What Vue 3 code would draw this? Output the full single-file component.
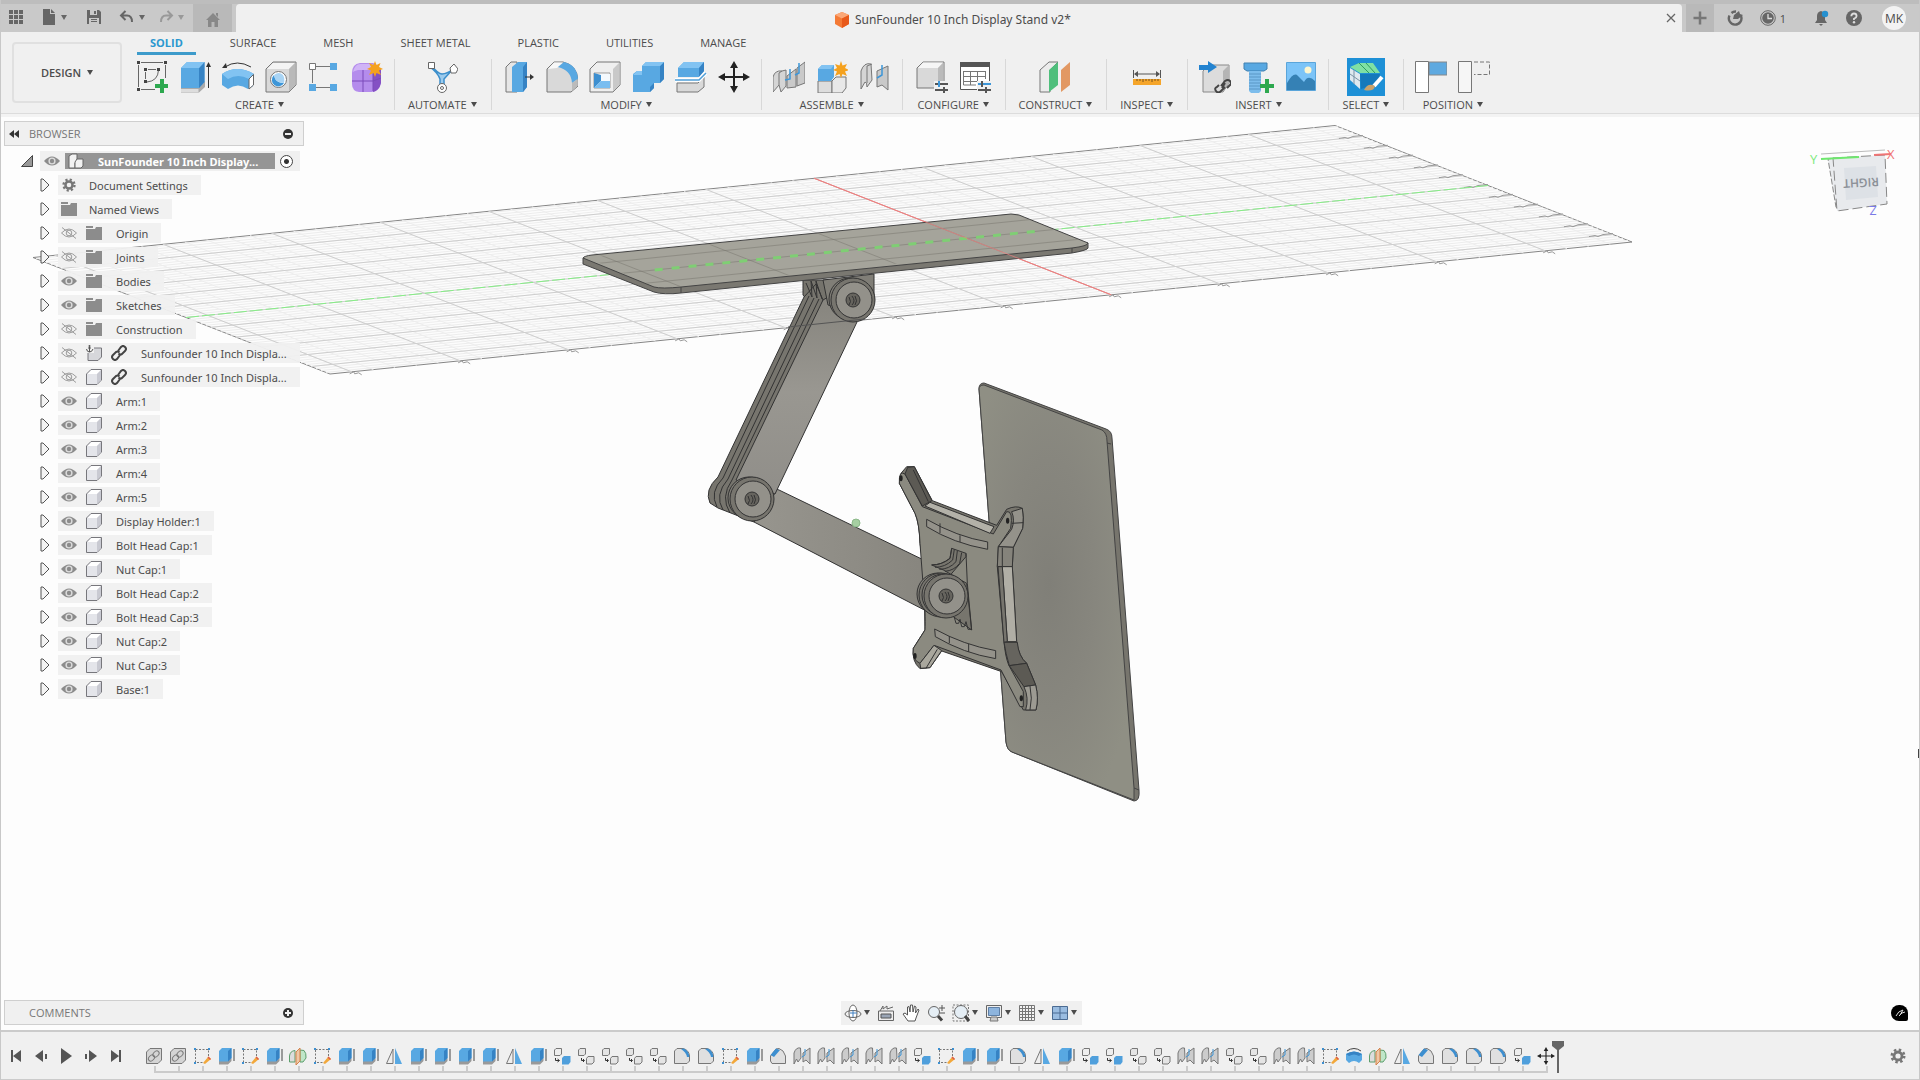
<template>
  <div class="app">
    <!-- Shared icon shapes -->
    <svg class="sprite" aria-hidden="true">
      <symbol id="i-apps" viewBox="0 0 16 16"><path d="M1 1h4v4H1zM6 1h4v4H6zM11 1h4v4h-4zM1 6h4v4H1zM6 6h4v4H6zM11 6h4v4h-4zM1 11h4v4H1zM6 11h4v4H6zM11 11h4v4h-4z" fill="#666" /></symbol>
      <symbol id="i-file" viewBox="0 0 16 16"><path d="M2 0h7v5h5v11H2zM10 0l4 4h-4z" fill="#666" /></symbol>
      <symbol id="i-save" viewBox="0 0 16 16"><path d="M1 1h12l2 2v12H1z" fill="#666" /><path d="M4 1h7v5H4zM3 9h10v6H3z" fill="#c9c9c9" /><path d="M8 2h2v3H8zM5 10h6v1H5zM5 12h6v1H5z" fill="#666" /></symbol>
      <symbol id="i-undo" viewBox="0 0 16 16"><path d="M6.500 2L2 6.500L6.500 11M2 6.500H8Q13 6.500 13 13" fill="none" stroke="#666" stroke-width="2" /></symbol>
      <symbol id="i-redo" viewBox="0 0 16 16"><path d="M9.500 2L14 6.500L9.500 11M14 6.500H8Q3 6.500 3 13" fill="none" stroke="#999" stroke-width="2" /></symbol>
      <symbol id="i-home" viewBox="0 0 16 16"><path d="M8 1L15 8H13V15H9.500V10H6.500V15H3V8H1zM11 1h2v4l-2-2z" fill="#888" /></symbol>
      <symbol id="i-plus" viewBox="0 0 16 16"><path d="M8 1.500V14.500M1.500 8H14.500" stroke="#777" stroke-width="2.500" /></symbol>
      <symbol id="i-close" viewBox="0 0 16 16"><path d="M4 4L12 12M12 4L4 12" stroke="#666" stroke-width="1.300" /></symbol>
      <symbol id="i-refresh" viewBox="0 0 16 16"><path d="M2.500 5.500A6.300 6.300 0 1 0 14 6M4.500 3A6.300 6.300 0 0 1 9 1.500" fill="none" stroke="#666" stroke-width="2.400" /><path d="M7 5L12 1L13 4L16 5L11 9L6 9z" fill="#666" /></symbol>
      <symbol id="i-clock" viewBox="0 0 16 16"><circle cx="8" cy="8" r="7.300" fill="none" stroke="#666" /><circle cx="8" cy="8" r="5.800" fill="#666" /><path d="M8 4V8.500H12" fill="none" stroke="#ddd" stroke-width="1.300" /></symbol>
      <symbol id="i-bell" viewBox="0 0 16 16"><path d="M8 1Q12 2 12 6V10L14 13H2L4 10V6Q4 2 8 1zM6 14h4l-2 2z" fill="#666" /><circle cx="12" cy="4" r="3.200" fill="#2590cf" /></symbol>
      <symbol id="i-help" viewBox="0 0 16 16"><circle cx="8" cy="8" r="8" fill="#666" /><path d="M5.300 6.200Q5.500 3.500 8 3.500T10.600 6Q10.600 7.500 8 8.700V10" fill="none" stroke="#ddd" stroke-width="1.800" /><circle cx="8" cy="12.300" r="1.200" fill="#ddd" /></symbol>
      <symbol id="i-cube" viewBox="0 0 16 16"><path d="M8 0L15 3V12L8 16L1 12V3z" fill="#f47a35" /><path d="M8 0L15 3L8 6.500L1 3z" fill="#fba878" /><path d="M15 3V12L8 16V6.500z" fill="#e8591a" /></symbol>

      <!-- Ribbon, 32px -->
      <symbol id="i-sketch" viewBox="0 0 32 32">
        <path d="M5 1.500H27M2.500 4V26M29.500 4V17M5 28.500H19M12 8.500H20M9.500 11V18M22.500 9Q22 20 11 21" fill="none" stroke="#666" />
        <path d="M1 0h3v3H1zM28 0h3v3h-3zM1 27h3v3H1zM8 7h3v3H8zM21 7h3v3h-3zM8 19h3v3H8z" fill="#444" />
        <path d="M24 18h4v5h5v4h-5v5h-4v-5h-5v-4h5z" fill="#2da84f" />
      </symbol>
      <symbol id="i-extrude" viewBox="0 0 32 32">
        <path d="M2 26H20L26 20V26L20 31.500H2z" fill="#aaa" /><path d="M2 28H19.500V31H2z" fill="#ddd" />
        <path d="M2 7L8 1H25.500V21L20 27H2z" fill="#58a8e2" /><path d="M20 7L25.500 1V21L20 27z" fill="#3683c4" /><path d="M2 7L8 1H25.500L20 7z" fill="#82c3f2" />
        <path d="M29.500 27V3" stroke="#333" /><path d="M27 6L29.500 1L32 6z" fill="#333" />
      </symbol>
      <symbol id="i-revolve" viewBox="0 0 32 32">
        <path d="M0 13Q15 3 32 13L31 25L26 28Q16 21 6 28L0 24z" fill="#58a8e2" /><path d="M0 13Q15 3 32 13L27 18Q16 12 6 18z" fill="#82c3f2" />
        <path d="M27 18L31.500 13.500V24L27 28z" fill="#fff" stroke="#666" />
        <path d="M3 6Q15 -2 29 6" fill="none" stroke="#333" /><path d="M0 7L4 2L5 7z" fill="#333" />
      </symbol>
      <symbol id="i-hole" viewBox="0 0 32 32">
        <path d="M1 8L8 1H31V24L24 31H1z" fill="#d9d9d9" stroke="#777" /><path d="M2 8L8 2H30L24 8z" fill="#f4f4f4" /><path d="M24 8L30.500 1.500V24L24 30.500z" fill="#b9b9b9" />
        <circle cx="13.500" cy="18.500" r="8" fill="#fff" stroke="#777" /><path d="M9 14Q10 22 19 22A6.500 6.500 0 1 1 9 14z" fill="#3d96d8" /><path d="M9 14Q14 10 18 14Q20 17 19 22Q10 22 9 14z" fill="#a9d4f4" />
      </symbol>
      <symbol id="i-pattern" viewBox="0 0 32 32">
        <path d="M8 5.500H22M8 26.500H22M4.500 9V22" stroke="#777" /><path d="M1.500 2.500h6v6h-6z" fill="#fff" stroke="#777" /><path d="M22 2h7v7h-7zM1 23h7v7H1zM22 23h7v7h-7z" fill="#58a8e2" />
      </symbol>
      <symbol id="i-form" viewBox="0 0 32 32">
        <path d="M1 12Q1 3 9 2H22Q30 5 30 12V22Q28 31 20 31H8Q1 30 1 23z" fill="#b48cec" /><path d="M2 11Q4 3 9 3H22L18 9H7Q3 10 2 11z" fill="#d0b4f6" /><path d="M22 12L30 8V22Q28 30 22 31z" fill="#8450c4" />
        <path d="M12 9V31M1 20H22L30 17M22 10V30" fill="none" stroke="#7a4aba" />
        <path d="M24 0L25.500 4L29.500 2L28 6L32 8L28 9.500L30 14L25.500 12L24 16L22.500 12L18 14L20 9.500L16 8L20 6L18 2L22.500 4z" fill="#f5a11d" />
      </symbol>
      <symbol id="i-automate" viewBox="0 0 32 32">
        <path d="M6 5Q12 13 16 13Q21 13 27 8L18 18V27H14V18Q12 12 4 6z" fill="#9ccbed" stroke="#3d8fcb" stroke-width="1.500" />
        <path d="M2.500 1.500h6v6h-6z" fill="#fff" stroke="#666" /><path d="M28 3L32 8L30 12H25L24 7z" fill="#fff" stroke="#666" /><circle cx="16" cy="27" r="4.500" fill="#fff" stroke="#666" /><circle cx="16" cy="27" r="1.500" fill="none" stroke="#666" />
      </symbol>
      <symbol id="i-presspull" viewBox="0 0 32 32">
        <path d="M3 6L8 1H14V31H3z" fill="#e6e6e6" stroke="#777" /><path d="M9 6L15 1H24V26L20 31H9z" fill="#58a8e2" /><path d="M20 6L24 1V26L20 31z" fill="#3683c4" /><path d="M22 16H28" stroke="#333" /><path d="M27 13L31 16L27 19z" fill="#333" />
      </symbol>
      <symbol id="i-fillet" viewBox="0 0 32 32">
        <path d="M1 8L8 1H17Q31 4 32 19V25L25 31H1z" fill="#d9d9d9" stroke="#777" /><path d="M2 8L8 1.500H17L11 7z" fill="#f8f8f8" /><path d="M12 6L18 1Q31 4 32 18L26 22Q25 9 12 6z" fill="#58a8e2" /><path d="M26 22L31.500 18V25L26 30z" fill="#bbb" />
      </symbol>
      <symbol id="i-shell" viewBox="0 0 32 32">
        <path d="M1 8L8 1H31V24L24 31H1z" fill="#efefef" stroke="#777" /><path d="M24 8L30.500 1.500V24L24 30.500z" fill="#c9c9c9" /><path d="M5 12h16v15H5z" fill="#fff" stroke="#999" /><path d="M5 12L12 14V20L5 27z" fill="#3d8fd0" /><path d="M12 13h9v8h-9z" fill="#f4f9fd" /><path d="M5 27L12 20H21V27z" fill="#79bdf0" />
      </symbol>
      <symbol id="i-combine" viewBox="0 0 32 32">
        <path d="M10 5L14 1H32V18L28 22H22V27L18 31H1V13L5 10H10z" fill="#58a8e2" /><path d="M28 5L32 1V18L28 22zM18 26L22 22V27L18 31z" fill="#3683c4" /><path d="M10 5L14 1H32L28 5zM1 14L5 10H10V14z" fill="#82c3f2" />
      </symbol>
      <symbol id="i-split" viewBox="0 0 32 32">
        <path d="M3 7L9 1H29V10L24 16H3z" fill="#58a8e2" /><path d="M3 7L9 1H29L24 7z" fill="#82c3f2" /><path d="M24 7L29 1V10L24 16z" fill="#3683c4" /><path d="M2 22H23L29 16V26L23 31H2z" fill="#d9d9d9" stroke="#777" /><path d="M0 19H24L31 12" fill="none" stroke="#fff" stroke-width="4" /><path d="M0 19H24L31 12" fill="none" stroke="#4f9fd8" stroke-width="1.500" />
      </symbol>
      <symbol id="i-move" viewBox="0 0 32 32"><path d="M16 4V28M4 16H28" stroke="#222" stroke-width="2" /><path d="M16 0L20 7H12zM16 32L20 25H12zM0 16L7 12V20zM32 16L25 12V20z" fill="#222" /></symbol>
      <symbol id="i-newcomp" viewBox="0 0 32 32">
        <path d="M2 20h14v12H2z" fill="#ddd" stroke="#777" /><path d="M16 20L20 16H30V27L26 32H16z" fill="#e8e8e8" stroke="#777" /><path d="M2 8L6 4H18V16L15 20H2z" fill="#58a8e2" /><path d="M2 8L6 4H18L15 8z" fill="#82c3f2" />
        <path d="M25 0L26.500 4.500L31 3L29 7L33 9L29 10.500L31 15L26.500 13L25 17L23.500 13L19 15L21 10.500L17 9L21 7L19 3L23.500 4.500z" fill="#f5a11d" />
      </symbol>
      <symbol id="i-joint" viewBox="0 0 32 32">
        <path d="M2 10Q5 1 12 3L13 19L8 26Q8 21 6 21L2 28z" fill="#d5d5d5" stroke="#777" /><path d="M13 3L8 5V22" fill="none" stroke="#777" /><path d="M18 10L29 5V29L23 24L18 26z" fill="#c9c9c9" stroke="#777" /><path d="M23 4V14L18 17" fill="none" stroke="#3d96d8" stroke-width="1.500" />
      </symbol>
      <symbol id="i-joint3" viewBox="0 0 32 32">
        <path d="M0 16Q2 9 9 10L13 9V25L8 31L6 24L0 31z" fill="#d5d5d5" stroke="#777" /><path d="M14 15L23 8V26L14 27zM24 7L32 1V22L24 25z" fill="#c9c9c9" stroke="#777" /><path d="M17 8V18L12 19M26 2V12L22 14" fill="none" stroke="#3d96d8" stroke-width="1.500" /><path d="M9 10L6 12V24" fill="none" stroke="#777" />
      </symbol>
      <symbol id="i-config" viewBox="0 0 32 32">
        <path d="M1 7L7 1H28V20L22 27H1z" fill="#d9d9d9" stroke="#777" /><path d="M2 7L7 1.500H27L22 7z" fill="#f6f6f6" /><path d="M22 7L27.500 1.500V20L22 27z" fill="#bbb" /><path d="M18 20h15v12H18z" fill="#f0f0f0" /><path d="M19 23H32M19 29H32" stroke="#555" stroke-width="2" /><path d="M23 20V26" stroke="#3d96d8" stroke-width="2" /><path d="M28 26V32" stroke="#555" stroke-width="2" />
      </symbol>
      <symbol id="i-table" viewBox="0 0 32 32">
        <path d="M1.500 1.500h29v27h-29z" fill="#fff" stroke="#555" /><path d="M1 1h30v5H1z" fill="#555" /><path d="M4 10.500H27M4 15.500H27M4 20.500H18M4.500 10V24H17M11.500 10V24M18.500 10V20M26.500 10V18" stroke="#777" fill="none" /><path d="M18 20h15v12H18z" fill="#f0f0f0" /><path d="M19 23H32" stroke="#3d96d8" stroke-width="2" /><path d="M19 29H32M27 26V32M23 20V26" stroke="#555" stroke-width="2" />
      </symbol>
      <symbol id="i-plane" viewBox="0 0 32 32"><path d="M1 9L10 1H19L11 9V31H1z" fill="#ececec" stroke="#777" /><path d="M10 9L19 1V24L10 31z" fill="#4fbf7c" /><path d="M22 9L31 1V24L22 31z" fill="#e29863" /></symbol>
      <symbol id="i-measure" viewBox="0 0 32 32"><path d="M2.500 9V17M29.500 9V17M4 13H28" stroke="#555" /><path d="M3 13L7 10V16zM29 13L25 10V16z" fill="#555" /><path d="M2 18h28v6H2z" fill="#f5a52a" /><path d="M6 18v2M9 18v2M12 18v3M15 18v2M18 18v2M21 18v3M24 18v2M27 18v2" stroke="#7a531a" /></symbol>
      <symbol id="i-derive" viewBox="0 0 32 32">
        <path d="M4 10L10 4H30V22L24 31H4z" fill="#dcdcdc" stroke="#888" /><path d="M24 10L30 4V22L24 30z" fill="#b5b5b5" /><path d="M0 4H9V0L18 6L9 12V9H0z" fill="#2383d0" />
        <path d="M22 25L26 20Q29 18 31 20T31 24L28 27M26 22L23 27M26 26L22 30Q19 33 17 30T18 26L20 24" fill="none" stroke="#444" stroke-width="2" />
      </symbol>
      <symbol id="i-fastener" viewBox="0 0 32 32"><path d="M2 2H25V8L22 10H5L2 8z" fill="#58a8e2" stroke="#4180b0" /><path d="M7 10h12v20l-2 2H9l-2-2z" fill="#7dbdec" /><path d="M7 13h12M7 16h12M7 19h12M7 22h12M7 25h12M7 28h12" stroke="#5a97c6" /><path d="M23 18h4v5h5v4h-5v5h-4v-5h-5v-4h5z" fill="#2da84f" /></symbol>
      <symbol id="i-image" viewBox="0 0 32 32"><path d="M1.500 1.500h29v28h-29z" fill="#7cc4f8" stroke="#5aa5da" /><circle cx="23" cy="9" r="3.500" fill="#fdf6d0" /><path d="M2 22Q9 10 13 15L19 21Q23 13 30 20V29H2z" fill="#3581b5" /></symbol>
      <symbol id="i-select" viewBox="0 0 38 38"><path d="M0 0h38v38H0z" fill="#1e90d6" /><path d="M3 9L12 5H26L33 15H13z" fill="#7fe0a4" /><path d="M12 5L22 15M19 5L28 15" stroke="#2e9c60" /><path d="M3 10L13 16V31L3 22z" fill="#dfe9f0" /><path d="M7 12V26M3 16L13 23" stroke="#7a93a5" /><path d="M13 16H33L30 26L14 31z" fill="#1579bb" /><path d="M27 28L35 19" stroke="#fff" stroke-width="4" /><path d="M17 32Q21 24 28 28Q27 34 17 32z" fill="#c9a26b" /></symbol>
      <symbol id="i-capture" viewBox="0 0 32 32"><path d="M14 1h18v13H14z" fill="#5ea9e0" stroke="#888" /><path d="M.500 .500h13v31H.500z" fill="#fff" stroke="#777" /></symbol>
      <symbol id="i-revert" viewBox="0 0 32 32"><path d="M.500 .500h13v31H.500z" fill="#f6f6f6" stroke="#777" /><path d="M16 1H31.500V13.500H16" fill="none" stroke="#777" stroke-dasharray="4 2" /></symbol>

      <!-- Browser tree, 16px -->
      <symbol id="i-eye" viewBox="0 0 16 16"><path d="M0 8Q8 -1 16 8Q8 17 0 8z" fill="#8c8c8c" /><circle cx="8" cy="8" r="3.600" fill="#ddd" /><circle cx="8" cy="8" r="2.200" fill="#8c8c8c" /></symbol>
      <symbol id="i-eyeoff" viewBox="0 0 16 16"><path d="M.500 8Q8 0 15.500 8Q8 16 .500 8zM1 2.500L15 13.500" fill="none" stroke="#9c9c9c" /><circle cx="8" cy="8" r="2.800" fill="none" stroke="#9c9c9c" /></symbol>
      <symbol id="i-folder" viewBox="0 0 16 16"><path d="M0 4H9L10 2H16V15H0zM0 1H7V3H0z" fill="#8c8c8c" /></symbol>
      <symbol id="i-gear" viewBox="-1 -1 18 18"><circle cx="8" cy="8" r="4" fill="none" stroke="#777" stroke-width="2.800" /><circle cx="8" cy="8" r="6.200" fill="none" stroke="#777" stroke-width="2.600" stroke-dasharray="2.440 2.430" /></symbol>
      <symbol id="i-body" viewBox="0 0 16 16"><path d="M.500 5L5 .500H15.500V11L11 15.500H.500z" fill="#e4e5ea" stroke="#77777c" /><path d="M1.500 5L5.500 1H15L11 5z" fill="#fff" /><path d="M11 5L15 1V11L11 15z" fill="#c9cad2" /></symbol>
      <symbol id="i-assembly" viewBox="0 0 16 16"><path d="M1 3L4 1H9V10H7V15H1z" fill="#f2f2f2" stroke="#666" /><path d="M7 9L9 6H15V13L13 15H7z" fill="#f2f2f2" stroke="#666" /></symbol>
      <symbol id="i-anchor" viewBox="0 0 16 16"><path d="M2 6L5 3H15.500V12L12 15.500H2z" fill="#d6d7db" stroke="#77777c" /><path d="M0 0h8v8H0z" fill="#f0f0f0" /><path d="M3.500 2V7M0.500 4Q1 7 3.500 7T7 4M2 3H5" fill="none" stroke="#555" /><circle cx="3.500" cy="1" r="1" fill="#555" /></symbol>
      <symbol id="i-link" viewBox="0 0 16 16"><path d="M7 6L10 2Q12 0 14 2T14 6L11 9Q9 10 7.500 8.500M9 10L6 14Q4 16 2 14T2 10L5 7Q7 6 8.500 7.500" fill="none" stroke="#444" stroke-width="2" /></symbol>

      <!-- Timeline features, 18px -->
      <symbol id="t-link" viewBox="0 0 18 18"><path d="M1.500 5L5 1.500H16.500V13L13 16.500H1.500z" fill="#d4d4d4" stroke="#777" /><ellipse cx="6.500" cy="11" rx="3.500" ry="2.500" transform="rotate(-45 6.500 11)" fill="none" stroke="#777" /><ellipse cx="11" cy="7" rx="3.500" ry="2.500" transform="rotate(-45 11 7)" fill="none" stroke="#777" /></symbol>
      <symbol id="t-sketch" viewBox="0 0 18 18"><path d="M2.500 2.500H15.500V11M2.500 3V15.500H10" fill="none" stroke="#777" stroke-dasharray="2 1.500" /><path d="M1 1h2v2H1zM15 1h2v2h-2zM1 15h2v2H1z" fill="#3d8fd0" /><path d="M10 16L15.500 9.500L18 12L12 17z" fill="#f2a83b" /><path d="M15.500 9.500L18 12L17 13L14.500 10.500z" fill="#dc5a4a" /></symbol>
      <symbol id="t-extrude" viewBox="0 0 18 18"><path d="M2 14H11L14.500 11V14L11 17.500H2z" fill="#999" /><path d="M2 4L5 1H14.500V11L11 14.500H2z" fill="#58a8e2" /><path d="M11 4L14.500 1V11L11 14.500z" fill="#3683c4" /><path d="M17 14V2" stroke="#444" /></symbol>
      <symbol id="t-mid" viewBox="0 0 18 18"><path d="M.500 9Q1 4 6 3.500V15H.500z" fill="#ddd" stroke="#5d9e6c" /><path d="M11 3L15 3.500Q17.500 6 17 11L14 15H11z" fill="#bfe6c8" stroke="#5d9e6c" /><path d="M7 5L11 1V14L7 18z" fill="#f0c7a6" stroke="#d3834d" /></symbol>
      <symbol id="t-mirror" viewBox="0 0 18 18"><path d="M8 2V16.500H1.500z" fill="#eee" stroke="#777" /><path d="M10 1V17H17z" fill="#58a8e2" /></symbol>
      <symbol id="t-compblue" viewBox="0 0 18 18"><path d="M1.500 3L3 1.500H8.500V7L7 8.500H1.500z" fill="#eee" stroke="#777" /><path d="M9 11L11 9H17.500V15L15.500 17.500H9z" fill="#4f9fdc" /><path d="M2.500 11V13.500H6M4.500 12L6.500 13.500L4.500 15" fill="none" stroke="#333" /></symbol>
      <symbol id="t-comp" viewBox="0 0 18 18"><path d="M1.500 3L3 1.500H8.500V7L7 8.500H1.500zM9.500 11.500L11 9.500H17V15L15 17H9.500z" fill="#e4e4e4" stroke="#777" /><path d="M4.500 11V13.500H7M6 12L7.500 13.500L6 15" fill="none" stroke="#333" /></symbol>
      <symbol id="t-fillet" viewBox="0 0 18 18"><path d="M1.500 4L4 1.500H10Q16 3 16.500 9V14L14 16.500H1.500z" fill="#e0e0e0" stroke="#777" /><path d="M8 2L11 1.500Q16 4 16.500 10L14 10Q13 5 8 2z" fill="#3d8fd0" /></symbol>
      <symbol id="t-chamfer" viewBox="0 0 18 18"><path d="M1.500 9L7 2L10 1.500L14 4L16.500 9V16.500H3L1.500 14z" fill="#e0e0e0" stroke="#777" /><path d="M1.500 8L7 1.500L11 3L5 10z" fill="#3d8fd0" /></symbol>
      <symbol id="t-joint" viewBox="0 0 18 18"><path d="M1 6Q3 0 7.500 1L8 11L5 15L3.500 12L1 17zM10 6L17 1V17L13 13L10 15z" fill="#ccc" stroke="#777" /><path d="M12 2V8L9 10" fill="none" stroke="#3d96d8" /></symbol>
      <symbol id="t-revolve" viewBox="0 0 18 18"><path d="M1 7Q9 2 17 7V13L14 16Q9 12 4 16L1 13z" fill="#58a8e2" /><path d="M1 7Q9 2 17 7L14 9Q9 6 4 9z" fill="#3683c4" /><path d="M2 4Q9 -1 16 4" fill="none" stroke="#444" /></symbol>
      <symbol id="t-move" viewBox="0 0 32 32"><use href="#i-move" width="32" height="32" /></symbol>

      <!-- Playback -->
      <symbol id="p-first" viewBox="0 0 16 16"><path d="M3 2h2v12H3zM13 2V14L5 8z" fill="#555" /></symbol>
      <symbol id="p-prev" viewBox="0 0 16 16"><path d="M10 2V14L2 8zM12 6h2v5h-2z" fill="#555" /></symbol>
      <symbol id="p-play" viewBox="0 0 16 16"><path d="M3 0L14 8L3 16z" fill="#555" /></symbol>
      <symbol id="p-next" viewBox="0 0 16 16"><path d="M6 2V14L14 8zM2 6h2v5H2z" fill="#555" /></symbol>
      <symbol id="p-last" viewBox="0 0 16 16"><path d="M11 2h2v12h-2zM3 2V14L11 8z" fill="#555" /></symbol>

      <!-- Navigation bar -->
      <symbol id="n-orbit" viewBox="0 0 18 18"><ellipse cx="9" cy="9" rx="4" ry="8" fill="#fff" stroke="#666" /><ellipse cx="9" cy="10" rx="8" ry="3.500" fill="none" stroke="#666" /><path d="M9 6V13M6 9H13" stroke="#3f7fc0" /></symbol>
      <symbol id="n-look" viewBox="0 0 18 18"><path d="M1.500 7H16.500V16.500H1.500zM3 7L6 2V5L10 2V5L16 3" fill="#ededed" stroke="#666" /><path d="M4 10h10v4H4z" fill="#9aa5b5" stroke="#555" /></symbol>
      <symbol id="n-pan" viewBox="0 0 18 18"><path d="M6 17L1 10L3 9L5.500 11V3L7 2.500L8 8L8.500 1L10.500 1L11 8L12.500 2L14 3L13.500 9L16 5L17 6L14 14L13 17z" fill="#fff" stroke="#555" /></symbol>
      <symbol id="n-zoom" viewBox="0 0 18 18"><circle cx="7" cy="8" r="5.500" fill="#e5eef5" stroke="#666" /><path d="M11 12L15 16.500" stroke="#444" stroke-width="3" /><path d="M12 4H18M15 1V7M13 9H18" stroke="#555" /></symbol>
      <symbol id="n-window" viewBox="0 0 18 18"><path d="M1 1H16.500V17H1z" fill="none" stroke="#777" stroke-dasharray="2 1.500" /><circle cx="9" cy="8" r="6.500" fill="#e5eef5" stroke="#666" /><path d="M13 12L17 17" stroke="#444" stroke-width="3" /></symbol>
      <symbol id="n-display" viewBox="0 0 18 18"><path d="M1.500 1.500h15v12h-15z" fill="#eee" stroke="#666" /><path d="M3.500 3.500h11v8h-11z" fill="#8db4dd" stroke="#5e7fa6" /><path d="M6 13h6l1 4H5z" fill="#ccc" stroke="#777" /></symbol>
      <symbol id="n-grid" viewBox="0 0 18 18"><path d="M1.500 1.500h15v15h-15zM4.500 1V17M7.500 1V17M10.500 1V17M13.500 1V17M1 4.500H17M1 7.500H17M1 10.500H17M1 13.500H17" fill="#f3f3f3" stroke="#777" /></symbol>
      <symbol id="n-views" viewBox="0 0 18 18"><path d="M1.500 2.500h15v13h-15zM9 2V16M1 9H17" fill="#9abce0" stroke="#4b6b92" /></symbol>
    </svg>

    <header>
      <div class="titlebar">
        <div class="quick">
          <button aria-label="Apps"><svg class="s16"><use href="#i-apps" /></svg></button>
          <button class="menu" aria-label="File"><svg class="s16"><use href="#i-file" /></svg><i class="caret"></i></button>
          <button class="save" aria-label="Save"><svg class="s16"><use href="#i-save" /></svg></button>
          <button class="menu" aria-label="Undo"><svg class="s16"><use href="#i-undo" /></svg><i class="caret"></i></button>
          <button class="menu faded" aria-label="Redo"><svg class="s16"><use href="#i-redo" /></svg><i class="caret"></i></button>
          <button class="home" aria-label="Home"><svg class="s16"><use href="#i-home" /></svg></button>
        </div>
        <div class="doc-tab">
          <span class="doc-name"><svg class="s16"><use href="#i-cube" /></svg>SunFounder 10 Inch Display Stand v2*</span>
          <button class="doc-close" aria-label="Close"><svg class="s16"><use href="#i-close" /></svg></button>
        </div>
        <div class="account">
          <button class="new-tab" aria-label="New design"><svg class="s16"><use href="#i-plus" /></svg></button>
          <button aria-label="Extensions"><svg class="s16"><use href="#i-refresh" /></svg></button>
          <button class="jobs" aria-label="Job status"><svg class="s16"><use href="#i-clock" /></svg>1</button>
          <button aria-label="Notifications"><svg class="s16"><use href="#i-bell" /></svg></button>
          <button aria-label="Help"><svg class="s16"><use href="#i-help" /></svg></button>
          <button class="avatar">MK</button>
        </div>
      </div>

      <div class="ribbon">
        <button class="workspace">DESIGN<i class="caret"></i></button>
        <div class="ribbon-main">
          <nav class="tabs">
            <button
              v-for="tab in tabs"
              :key="tab"
              :class="{ active: tab === activeTab }"
              @click="activeTab = tab"
            >{{ tab }}</button>
          </nav>
          <div class="groups">
            <section
              v-for="group in groups"
              :key="group.name"
              class="group"
              :class="{ loose: group.loose }"
            >
              <div class="tools">
                <button v-for="icon in group.icons" :key="icon" :aria-label="icon">
                  <svg :class="icon === 'select' ? 's38' : 's32'"><use :href="'#i-' + icon" /></svg>
                </button>
              </div>
              <button class="group-name">{{ group.name }}<i class="caret"></i></button>
            </section>
          </div>
        </div>
      </div>
    </header>

    <main class="viewport">
      <svg class="scene" viewBox="0 116 1920 914">
        <defs>
          <linearGradient id="armFill" x1="0" y1="0" x2="0" y2="1">
            <stop offset="0" stop-color="#85837c" /><stop offset=".5" stop-color="#999791" /><stop offset="1" stop-color="#908e89" />
          </linearGradient>
          <linearGradient id="lowFill" x1="0" y1="0" x2="1" y2="0">
            <stop offset="0" stop-color="#98968f" /><stop offset="1" stop-color="#85837c" />
          </linearGradient>
          <radialGradient id="panelFill" cx=".45" cy=".48" r=".6">
            <stop offset="0" stop-color="#807f78" /><stop offset=".5" stop-color="#87867e" /><stop offset="1" stop-color="#8f8f84" />
          </radialGradient>
          <clipPath id="plateClip"><path d="M586 257L1001 215L1019 215L1086 243L681 287L654 287z" /></clipPath>
          <g id="knob" stroke="#333">
            <circle cx="-3" cy="-1" r="21" fill="#807e77" />
            <circle r="22" fill="#77756e" />
            <circle cx="1" r="18" fill="#93918a" />
            <circle cx="0" cy="0" r="7" fill="#66645e" />
            <path d="M-4 -3Q-1 2 -4 5M-1 -4Q3 1 -1 5M2 -4Q5 1 2 5" fill="none" />
          </g>
        </defs>

        <!-- Ground grid -->
        <polygon :points="poly([[0, 0], [1, 0], [1, 1], [0, 1]])" fill="#fcfcfc" stroke="#858585" />
        <path :d="minorLines" class="minor" />
        <path :d="majorLines" class="major" />
        <path :d="tickMarks" class="ticks" />
        <path :d="seg(0, 0.515, 1, 0.515)" class="axis-y" />
        <path :d="seg(0.6, 0, 0.6, 1)" class="axis-x" />

        <!-- Display panel -->
        <g stroke="#444" stroke-linejoin="round">
          <path d="M979 389Q979 383 984 383L1106 429Q1112 431 1112 438L1139 790Q1140 801 1134 801L1012 752Q1007 750 1006 742z" fill="#77756d" />
          <path d="M979 389Q979 385 984 385L1102 430Q1107 433 1107 441L1134 788L1134 800L1012 752Q1007 750 1006 742z" fill="url(#panelFill)" />
          <path d="M1107 443L1111 444M1134 788L1139 790" fill="none" />
        </g>

        <!-- Lower arm -->
        <path d="M754 522L936 616L952 575L932 564L779 490L745 478z" fill="url(#lowFill)" stroke="#333" />

        <!-- Display holder, drawn three times larger -->
        <g transform="translate(860 370) scale(.3333)" class="holder" fill="none">
          <path d="M123 310L140 290H163L217 392L410 466L440 418Q468 405 487 415Q493 450 488 475L460 532L457 590L470 815Q476 860 500 880L527 945Q537 985 528 1020L490 1020L425 905L245 843L210 893L180 896Q155 875 160 835L195 780L192 600L180 520Q178 460 165 430L118 340z" fill="#77756d" />
          <path d="M118 340Q116 300 135 312L187 410L400 492L440 425Q460 420 452 475L415 530L412 590L432 815Q436 860 446 885L490 965V1010L480 1010L423 900L222 826L180 880Q155 870 160 835L195 780Q196 760 195 720L180 520Q178 460 165 430z" fill="#8b8a80" />
          <path d="M195 408L210 397L402 470L390 490z" fill="#b3b1a8" />
          <path d="M143 292L135 312L187 408L216 392L163 290z" fill="#5c5a54" />
          <path d="M160 300L205 395" />
          <path d="M455 425Q466 450 455 478L415 530L460 532L488 475Q492 440 487 415z" fill="#94928a" />
          <path d="M415 530L460 532L457 590H412z" fill="#85837b" />
          <path d="M455 460L490 458M427 533L427 590" />
          <path d="M427 590H457L470 815H442z" fill="#b0aea5" />
          <path d="M414 590L427 590L442 815L432 817z" fill="#77756e" />
          <path d="M432 817H472Q476 860 500 880L448 887Q437 850 432 817z" fill="#66645e" />
          <path d="M448 887L500 880L527 945L492 950z" fill="#5c5a54" />
          <path d="M492 950L527 945Q537 985 528 1020H497Q508 985 492 950z" fill="#9c9a92" />
          <path d="M510 948Q518 985 510 1020" />
          <path d="M222 826L245 842L210 893L182 895L180 880z" fill="#a9a79d" />
          <path d="M198 895L232 838" />
          <path d="M200 448Q290 500 383 516V538Q280 520 200 470zM240 460V490M300 496V516M224 777Q310 825 407 842V866Q310 850 226 800zM268 798V820M326 822V846" fill="#94928a" />
          <path d="M275 535L270 565Q245 585 215 585L250 600L320 640L335 780L280 740L250 640L318 560L318 550z" fill="#77756d" stroke="none" />
          <path d="M275 535L270 565Q245 585 215 585M283 538L278 570Q255 592 225 592M292 543L288 575Q268 598 238 598M305 548L299 580Q282 602 255 604M318 550L322 640L335 780" />
          <path d="M283 742L288 760H296L300 748L305 770H313L318 755L324 778H335" />
          <ellipse cx="123" cy="325" rx="5" ry="9" fill="#222" /><ellipse cx="443" cy="452" rx="5" ry="9" fill="#222" />
          <ellipse cx="165" cy="858" rx="5" ry="9" fill="#222" /><ellipse cx="484" cy="985" rx="5" ry="9" fill="#222" />
        </g>
        <use href="#knob" x="941" y="595" /><use href="#knob" x="946" y="596" />

        <!-- Upper arm and its stacked leaves -->
        <g stroke="#333">
          <path d="M803 280H840V300L815 310L803 295z" fill="#75736c" />
          <path d="M804 297L718 477Q704 490 710 503L718 508L754 522L775 493L823 300L816 284z" fill="#77756e" />
          <path d="M823 300L736 480L775 494L857 322L840 290z" fill="url(#armFill)" />
          <path d="M809 296L723 478Q709 492 717 507M814 298L728 479Q714 495 723 510M819 299L732 480Q720 497 730 513M806 283L812 297L811 281L817 298L816 281L822 299" fill="none" />
          <path d="M823 280L874 274V302L850 310L828 305z" fill="#807e77" />
        </g>
        <use href="#knob" x="853" y="300" />
        <use href="#knob" x="752" y="499" />

        <!-- Base plate -->
        <g stroke="#444" stroke-linejoin="round">
          <path d="M583 258V264L654 292Q664 295 681 293L1072 253Q1088 250 1088 248V243L681 280z" fill="#7a7871" />
          <path d="M583 258Q584 256 592 255L1001 215Q1012 213 1019 215L1088 243Q1088 246 1072 248L681 287Q662 289 654 287z" fill="#a5a49b" />
          <path d="M681 287V293M1072 248V253" fill="none" />
        </g>
        <g opacity=".5" clip-path="url(#plateClip)">
          <path :d="majorLines" class="major on-plate" />
        </g>
        <path :d="seg(0.36, 0.515, 0.655, 0.515)" class="axis-y plate-axis" clip-path="url(#plateClip)" />
        <path :d="seg(0.6, 0, 0.6, 1)" class="axis-x faint" />
        <path d="M788 327L865 319" stroke="#555" />
        <circle cx="856" cy="523" r="4" fill="#a6cfa2" stroke="#8cb98a" />
      </svg>

      <aside class="browser">
        <div class="panel-head">
          <svg class="rewind" viewBox="0 0 10 8"><path d="M5 0V8L0 4zM10 0V8L5 4z" fill="#333" /></svg>
          <h2>BROWSER</h2>
          <button class="dot minus" aria-label="Collapse browser"></button>
        </div>
        <ul class="tree">
          <li class="root">
            <svg class="open-mark" viewBox="0 0 12 12"><path d="M11.500 .500V11.500H.500z" fill="#999" stroke="#444" /></svg>
            <div class="root-body">
              <svg class="s16"><use href="#i-eye" /></svg>
              <span class="root-name"><svg class="s16"><use href="#i-assembly" /></svg>SunFounder 10 Inch Display...</span>
              <input type="radio" checked aria-label="Activate component" />
            </div>
          </li>
          <li v-for="(node, i) in nodes" :key="i">
            <svg class="expand" viewBox="0 0 10 14"><path d="M1 1H3L9 7L3 13H1z" fill="#f3f3f3" stroke="#555" /></svg>
            <div class="node">
              <svg v-for="icon in node.icons" :key="icon" class="s16"><use :href="'#i-' + icon" /></svg>
              <span :class="{ near: node.icons.length === 1 }">{{ node.name }}</span>
            </div>
          </li>
        </ul>
      </aside>

      <!-- View cube -->
      <svg class="viewcube" viewBox="0 0 90 70">
        <path d="M19 16L26 15L30 68L27 64z" fill="#e9ebee" stroke="#888" stroke-dasharray="6 2" />
        <path d="M24 15L76 12L78 61L28 68z" fill="#e8eaed" stroke="#888" stroke-dasharray="10 4" />
        <path d="M35 25L67 23L69 54L37 57z" fill="#dde1e6" />
        <path d="M12 11L76 7" stroke="#bbb" />
        <path d="M12 16L50 14" stroke="#6ee86e" stroke-width="2" /><path d="M65 12L82 11" stroke="#f07575" stroke-width="2" />
        <text x="52" y="40" transform="rotate(177 52 40)" text-anchor="middle" dominant-baseline="central" class="face">RIGHT</text>
        <text x="1" y="21" class="ax green">Y</text>
        <text x="78" y="16" class="ax red">X</text>
        <text x="64" y="68" transform="rotate(180 64 68)" text-anchor="middle" dominant-baseline="central" class="ax blue">Z</text>
      </svg>

      <footer class="overlay-foot">
        <div class="panel-head comments">
          <h2>COMMENTS</h2>
          <button class="dot plus" aria-label="Expand comments"></button>
        </div>
        <div class="navbar">
          <button v-for="item in navItems" :key="item.icon" :aria-label="item.icon">
            <svg class="s18"><use :href="'#n-' + item.icon" /></svg><i v-if="item.menu" class="caret"></i>
          </button>
        </div>
        <button class="assistant" aria-label="Assistant"><svg class="s16" viewBox="0 0 16 16"><path d="M4 11Q6 6 11 5L8 10M7 11Q10 7 13 7" fill="none" stroke="#ddd" /></svg></button>
      </footer>
      <span class="edge-cursor"></span>
    </main>

    <div class="timeline">
      <div class="playback">
        <button v-for="p in playback" :key="p" :aria-label="p"><svg class="s16"><use :href="'#p-' + p" /></svg></button>
      </div>
      <ol class="features">
        <li v-for="(f, i) in features" :key="i"><svg class="s18"><use :href="'#t-' + f" /></svg></li>
      </ol>
      <svg class="marker" viewBox="0 0 12 32"><path d="M0 0H12V5L7 9V32H5V9L0 5z" fill="#666" /></svg>
      <button class="settings" aria-label="Timeline settings"><svg class="s18"><use href="#i-gear" /></svg></button>
    </div>
  </div>
</template>

<script setup>
import { ref } from "vue";

const tabs = ["SOLID", "SURFACE", "MESH", "SHEET METAL", "PLASTIC", "UTILITIES", "MANAGE"];
const activeTab = ref("SOLID");

const groups = [
  { name: "CREATE", icons: ["sketch", "extrude", "revolve", "hole", "pattern", "form"] },
  { name: "AUTOMATE", icons: ["automate"], loose: true },
  { name: "MODIFY", icons: ["presspull", "fillet", "shell", "combine", "split", "move"] },
  { name: "ASSEMBLE", icons: ["joint3", "newcomp", "joint"] },
  { name: "CONFIGURE", icons: ["config", "table"], loose: true },
  { name: "CONSTRUCT", icons: ["plane"], loose: true },
  { name: "INSPECT", icons: ["measure"], loose: true },
  { name: "INSERT", icons: ["derive", "fastener", "image"] },
  { name: "SELECT", icons: ["select"], loose: true },
  { name: "POSITION", icons: ["capture", "revert"] },
];

const component = (name) => ({ name, icons: ["eye", "body"] });

const nodes = [
  { name: "Document Settings", icons: ["gear"] },
  { name: "Named Views", icons: ["folder"] },
  { name: "Origin", icons: ["eyeoff", "folder"] },
  { name: "Joints", icons: ["eyeoff", "folder"] },
  { name: "Bodies", icons: ["eye", "folder"] },
  { name: "Sketches", icons: ["eye", "folder"] },
  { name: "Construction", icons: ["eyeoff", "folder"] },
  { name: "Sunfounder 10 Inch Displa...", icons: ["eyeoff", "anchor", "link"] },
  { name: "Sunfounder 10 Inch Displa...", icons: ["eyeoff", "body", "link"] },
  ...[
    "Arm:1", "Arm:2", "Arm:3", "Arm:4", "Arm:5", "Display Holder:1", "Bolt Head Cap:1",
    "Nut Cap:1", "Bolt Head Cap:2", "Bolt Head Cap:3", "Nut Cap:2", "Nut Cap:3", "Base:1",
  ].map(component),
];

const navItems = [
  { icon: "orbit", menu: true },
  { icon: "look" },
  { icon: "pan" },
  { icon: "zoom" },
  { icon: "window", menu: true },
  { icon: "display", menu: true },
  { icon: "grid", menu: true },
  { icon: "views", menu: true },
];

const playback = ["first", "prev", "play", "next", "last"];

const features = (
  "link link sketch extrude sketch extrude mid sketch extrude extrude mirror extrude extrude " +
  "extrude extrude mirror extrude compblue comp comp comp comp fillet fillet sketch extrude " +
  "chamfer joint joint joint joint joint compblue sketch extrude extrude fillet mirror extrude " +
  "compblue compblue comp comp joint joint comp comp joint joint sketch revolve mid mirror " +
  "chamfer fillet fillet fillet compblue move"
).split(" ");

// The ground grid is a parallelogram: u runs along Y, v runs along X
const at = (u, v) => [33 + 1302 * u + 297 * v, 257.5 - 132 * u + 116.5 * v];
const fmt = (p) => p.map((n) => n.toFixed(1)).join(" ");
const poly = (pts) => pts.map(([u, v]) => fmt(at(u, v))).join(" ");
const seg = (u1, v1, u2, v2) => `M${fmt(at(u1, v1))}L${fmt(at(u2, v2))}`;

const steps = (start, step) => {
  const out = [];
  for (let n = start; n < 1; n += step) out.push(n);
  return out;
};

const uMajor = steps(1 / 60, 1 / 12);
const vMajor = steps(0.094, 0.0842);

const minorLines = [
  ...steps(1 / 60, 1 / 60).map((u) => seg(u, 0, u, 1)),
  ...steps(0.0098, 0.01684).map((v) => seg(0, v, 1, v)),
].join("");

const majorLines = [
  ...uMajor.map((u) => seg(u, 0, u, 1)),
  ...vMajor.map((v) => seg(0, v, 1, v)),
].join("");

const tickMarks = [
  ...uMajor.map((u) => {
    const [x, y] = at(u, 1);
    return `M${x - 2} ${y + 2}l4 -2l1 2l4 -1l3 2`;
  }),
  ...vMajor.map((v) => {
    const [x, y] = at(1, v);
    return `M${x - 24} ${y + 2}l6 -1l3 1l5 -2l10 -1`;
  }),
].join("");
</script>

<style>
html,
body {
  background: #fdfdfd;
}
</style>

<style scoped>
.app {
  display: flex;
  flex-direction: column;
  height: 100vh;
  box-sizing: border-box;
  border-left: 1px solid #c8c8c8;
  border-right: 1px solid #c8c8c8;
  overflow: hidden;
  font-family: "Open Sans", "Noto Sans", sans-serif;
  font-size: 11px;
  white-space: nowrap;
  color: #4c4c4c;
}

.sprite {
  display: none;
}

button {
  display: flex;
  align-items: center;
  justify-content: center;
  margin: 0;
  padding: 0;
  border: 0;
  background: none;
  color: inherit;
  font: inherit;
}

svg {
  display: block;
  flex: none;
  overflow: visible;
}

.s16 {
  width: 16px;
  height: 16px;
}

.s18 {
  width: 18px;
  height: 18px;
}

.s32 {
  width: 32px;
  height: 32px;
}

.s38 {
  width: 38px;
  height: 38px;
}

.caret {
  border: 3px solid transparent;
  border-top: 5px solid currentColor;
  border-bottom: 0;
}

/* Title bar */
.titlebar {
  display: flex;
  height: 28px;
  border-top: 4px solid #bdbdbd;
  background: #c9c9c9;
}

.quick {
  display: flex;
  align-items: stretch;
  box-sizing: border-box;
  width: 235px;
  padding-left: 7px;
}

.quick button {
  width: 16px;
  padding-bottom: 2px;
}

.quick .menu {
  width: 32px;
  margin-left: 14px;
  gap: 4px;
  color: #666;
}

.quick .save {
  margin-left: 16px;
}

.quick .menu + .menu {
  margin-left: 7px;
}

.quick .menu.faded {
  color: #999;
}

.quick .home {
  width: 39px;
  margin-left: auto;
  margin-right: 4px;
  padding: 4px 0 0;
  background: #b9b9b9;
}

.doc-tab {
  display: flex;
  flex: 1;
  align-items: center;
  border-radius: 4px 4px 0 0;
  background: #f0f0f0;
}

.doc-name {
  display: flex;
  flex: 1;
  align-items: center;
  justify-content: center;
  gap: 5px;
  padding: 3px 0 0 6px;
  font-family: "Noto Sans", sans-serif;
  font-size: 12px;
}

.doc-close {
  width: 16px;
  height: 24px;
  margin-right: 3px;
}

.account {
  display: flex;
  align-items: stretch;
  gap: 17px;
  padding: 0 13px 0 4px;
}

.new-tab {
  width: 28px;
  margin-right: -4px;
  background: #b9b9b9;
}

.jobs {
  gap: 4px;
  margin-right: 10px;
}

.avatar {
  align-self: center;
  width: 24px;
  height: 24px;
  margin-left: 3px;
  border-radius: 12px;
  background: #f3f3f3;
  font-size: 12px;
}

/* Ribbon */
.ribbon {
  display: flex;
  height: 81px;
  border-bottom: 1px solid #dcdcdc;
  background: #f0f0f0;
  box-shadow: 0 3px 0 #f3f3f3;
}

.workspace {
  gap: 6px;
  width: 110px;
  height: 61px;
  margin: 10px 3px 0 11px;
  box-sizing: border-box;
  border: 2px solid #e0e0e0;
  border-radius: 4px;
  font-weight: 600;
}

.tabs {
  display: flex;
  gap: 21px;
  margin-left: 12px;
}

.tabs button {
  height: 23px;
  box-sizing: border-box;
  padding: 0 13px;
  border-bottom: 3px solid transparent;
}

.tabs .active {
  border-color: #3d9bcb;
  color: #2a97cf;
  font-weight: 700;
}

.groups {
  display: flex;
  padding-top: 4px;
}

.group {
  display: flex;
  flex-direction: column;
  align-items: center;
  height: 51px;
  padding: 0 11px;
  border-right: 1px solid #d8d8d8;
}

.group.loose {
  padding: 0 14px 0 13px;
}

.group:last-child {
  border: 0;
}

.tools {
  display: flex;
  flex: none;
  align-items: center;
  gap: 11px;
  height: 36px;
}

.tools button {
  height: 32px;
}

.group-name {
  flex: none;
  gap: 4px;
  height: 18px;
}

/* Viewport */
.viewport {
  position: relative;
  display: flex;
  flex: 1;
  flex-direction: column;
  justify-content: space-between;
  min-height: 0;
  padding: 7px 0 5px 3px;
}

.scene {
  position: absolute;
  inset: 2px -1px 0;
  width: calc(100% + 2px);
  height: calc(100% - 2px);
}

.minor {
  fill: none;
  stroke: #ededed;
}

.major {
  fill: none;
  stroke: #cecece;
}

.on-plate {
  stroke: #77766e;
}

.ticks {
  fill: none;
  stroke: #999;
}

.axis-y {
  fill: none;
  stroke: #86ee86;
  stroke-dasharray: 13 3;
}

.plate-axis {
  stroke: #7fce74;
  stroke-width: 3;
  stroke-dasharray: 8 9;
}

.axis-x {
  fill: none;
  stroke: #ee7d7d;
}

.faint {
  opacity: 0.7;
}

.holder path {
  stroke: #333;
  stroke-width: 3;
  stroke-linejoin: round;
}

.browser {
  position: relative;
  width: 300px;
}

.panel-head {
  display: flex;
  align-items: center;
  box-sizing: border-box;
  width: 300px;
  height: 25px;
  padding: 0 10px 0 4px;
  border: 1px solid #cfcfcf;
  background: #f0f0f0;
}

.panel-head h2 {
  flex: 1;
  margin: 0;
  font-size: 11px;
  font-weight: 400;
  color: #777;
}

.rewind {
  width: 10px;
  height: 8px;
  margin-right: 10px;
}

.dot {
  width: 10px;
  height: 10px;
  border-radius: 5px;
  background: #333;
}

.dot::before {
  content: "";
  width: 6px;
  height: 2px;
  background: #f0f0f0;
}

.dot.plus {
  background:
    linear-gradient(#f0f0f0, #f0f0f0) center / 2px 6px no-repeat,
    #333;
}

.tree {
  margin: 3px 0 0;
  padding: 0;
  list-style: none;
  font-family: "Noto Sans", sans-serif;
}

.tree li {
  display: flex;
  align-items: center;
  height: 24px;
  padding-left: 36px;
}

.expand {
  width: 10px;
  height: 14px;
  margin-right: 8px;
}

.node {
  display: flex;
  align-items: center;
  gap: 9px;
  height: 20px;
  padding: 0 13px 0 3px;
  background: rgba(240, 240, 240, 0.95);
}

.node span {
  margin-left: 5px;
}

.node .near {
  margin-left: 3px;
}

.tree .root {
  padding-left: 17px;
}

.open-mark {
  width: 12px;
  height: 12px;
  margin-right: 7px;
}

.root-body {
  display: flex;
  align-items: center;
  width: 260px;
  height: 20px;
  box-sizing: border-box;
  padding-left: 4px;
  gap: 5px;
  background: #f0f0f0;
}

.root-name {
  display: flex;
  align-items: center;
  gap: 14px;
  box-sizing: border-box;
  width: 210px;
  height: 16px;
  padding-left: 3px;
  background: #959595;
  color: #fff;
  font-weight: 700;
}

.root-body input {
  appearance: none;
  width: 13px;
  height: 13px;
  margin: 0;
  border: 1px solid #444;
  border-radius: 7px;
  background: radial-gradient(circle, #333 0 2px, #fff 3px);
}

.viewcube {
  position: absolute;
  top: 29px;
  right: 20px;
  width: 90px;
  height: 70px;
}

.face {
  font-size: 12px;
  font-weight: 600;
  fill: #8b9097;
}

.ax {
  font-size: 13px;
}

.green {
  fill: #7dea7d;
}

.red {
  fill: #f07575;
}

.blue {
  fill: #7a7ae6;
}

.overlay-foot {
  position: relative;
  display: grid;
  grid-template-columns: 1fr auto 1fr;
  align-items: center;
}

.comments {
  padding-left: 24px;
}

.navbar {
  display: flex;
  align-items: center;
  gap: 7px;
  height: 24px;
  padding: 0 5px 0 3px;
  background: #f0f0f0;
}

.navbar button {
  gap: 2px;
}

.assistant {
  justify-self: end;
  width: 17px;
  height: 16px;
  margin-right: 11px;
  border-radius: 8px 8px 2px 8px;
  background: #000;
}

.edge-cursor {
  position: absolute;
  top: 635px;
  right: -1px;
  width: 2px;
  height: 9px;
  background: #444;
}

/* Timeline */
.timeline {
  display: flex;
  align-items: flex-start;
  height: 47px;
  border-top: 2px solid #cbcbcb;
  border-bottom: 1px solid #cbcbcb;
  background: #f0f0f0;
}

.playback {
  display: flex;
  gap: 9px;
  width: 134px;
  padding: 16px 0 0 7px;
}

.features {
  display: flex;
  margin: 0;
  padding: 15px 0 0;
  list-style: none;
}

.features li {
  position: relative;
  display: flex;
  justify-content: center;
  width: 24px;
  height: 26px;
}

/* Rail under the icons, with one tick per feature */
.features li::before {
  content: "";
  position: absolute;
  left: 12px;
  right: -12px;
  bottom: 0;
  height: 5px;
  border-left: 2px solid #cbcbcb;
  border-bottom: 2px solid #cbcbcb;
}

.features li:last-child::before {
  right: 10px;
}

.marker {
  width: 12px;
  height: 32px;
  margin: 9px 0 0 -6px;
}

.settings {
  margin: 15px 12px 0 auto;
}
</style>
